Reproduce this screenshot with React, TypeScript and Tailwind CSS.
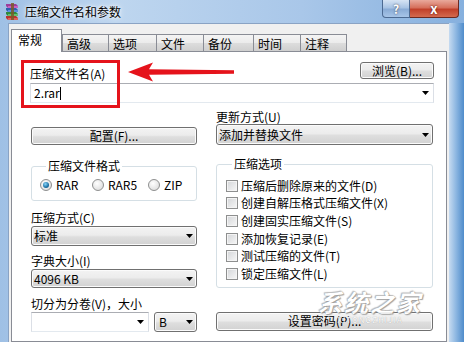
import React from "react";

function Arrow() {
  return (
    <svg width="7" height="4" viewBox="0 0 7 4" className="shrink-0">
      <path d="M0 0H7L3.5 4Z" fill="#000" />
    </svg>
  );
}

function Combo({ text, className = "" }: { text: string; className?: string }) {
  return (
    <div
      className={`flex items-center rounded-[3px] border border-[#707070] bg-[linear-gradient(#f3f3f3,#ececec_45%,#dedede_55%,#d2d2d2)] shadow-[inset_0_0_0_1px_#fbfbfb] pl-[2px] pr-[3px] ${className}`}
    >
      <span className="flex-1 leading-[14px] whitespace-nowrap">{text}</span>
      <Arrow />
    </div>
  );
}

function Btn({ text, className = "" }: { text: string; className?: string }) {
  return (
    <div
      className={`flex items-center justify-center rounded-[3px] border border-[#707070] bg-[linear-gradient(#f3f3f3,#ececec_45%,#dedede_55%,#d2d2d2)] shadow-[inset_0_0_0_1px_#fbfbfb] leading-[14px] whitespace-nowrap ${className}`}
    >
      {text}
    </div>
  );
}

function Check() {
  return (
    <div className="w-[12px] h-[12px] shrink-0 border border-[#8e8f8f] bg-[linear-gradient(135deg,#d3d5d8,#f7f7f7)] shadow-[inset_0_0_0_1px_#f4f4f4]" />
  );
}

function Radio({ on = false }: { on?: boolean }) {
  return (
    <div className="w-[12px] h-[12px] shrink-0 rounded-full border border-[#8e8f8f] bg-[radial-gradient(circle_at_40%_35%,#ffffff,#d6d6d6)] flex items-center justify-center">
      {on && (
        <div className="w-[6px] h-[6px] rounded-full bg-[radial-gradient(circle_at_40%_35%,#8ad6fa,#1b70a3_60%,#0d4b78)]" />
      )}
    </div>
  );
}

function RarIcon() {
  return (
    <svg width="16" height="17" viewBox="0 0 16 17">
      <path d="M2 1h10l2 2v2H4L2 3Z" fill="#9c3e9a" />
      <path d="M4 3h10v2H4Z" fill="#c862c4" />
      <path d="M2 5h10l2 2v2H4L2 7Z" fill="#2f5fae" />
      <path d="M4 7h10v2H4Z" fill="#5b8ee0" />
      <path d="M2 9h10l2 2v2H4L2 11Z" fill="#2e8a3e" />
      <path d="M4 11h10v2H4Z" fill="#63c06e" />
      <path d="M2 13h10l2 2v2H4L2 15Z" fill="#b9342d" />
      <path d="M4 15h10v2H4Z" fill="#e0605a" />
      <rect x="7" y="0" width="3" height="17" fill="#7a5a2a" opacity="0.85" />
    </svg>
  );
}

const checks = [
  "压缩后删除原来的文件(D)",
  "创建自解压格式压缩文件(X)",
  "创建固实压缩文件(S)",
  "添加恢复记录(E)",
  "测试压缩的文件(T)",
  "锁定压缩文件(L)",
];

const tabs = [
  { t: "高级", w: "w-[47px]" },
  { t: "选项", w: "w-[49px]" },
  { t: "文件", w: "w-[48px]" },
  { t: "备份", w: "w-[51px]" },
  { t: "时间", w: "w-[48px]" },
  { t: "注释", w: "w-[47px]" },
];

export default function App() {
  return (
    <div className="relative w-[464px] h-[342px] overflow-hidden flex flex-col bg-[linear-gradient(to_right,#9fc0e5,#bed6ef_25%,#a9c7e9_65%,#86b0de)] text-[12px] text-black font-['Noto_Sans_CJK_SC','Noto_Sans',sans-serif]">
      {/* title bar */}
      <div className="h-[23px] shrink-0 flex items-start">
        <div className="flex items-center h-[23px] pl-[4px]">
          <RarIcon />
          <span className="ml-[5px] leading-[14px] [text-shadow:0_0_6px_#ffffff,0_0_3px_#ffffff]">
            压缩文件名和参数
          </span>
        </div>
        <div className="ml-auto mr-[5px] flex">
          <div className="w-[28px] h-[18px] rounded-bl-[4px] border border-t-0 border-[#4c6a92] bg-[linear-gradient(#d6e4f4,#a9c4e4_45%,#8aacd6_55%,#a7c5e8)] flex items-center justify-center text-white font-bold text-[12px] leading-[12px] [text-shadow:0_0_2px_#334]">
            ?
          </div>
          <div className="w-[49px] h-[18px] rounded-br-[4px] border border-t-0 border-l-0 border-[#6b2a22] bg-[linear-gradient(#e9a99c,#d6705c_45%,#c1402a_55%,#d46a4f)] flex items-center justify-center text-white font-bold text-[13px] leading-[13px] [text-shadow:0_0_2px_#400]">
            x
          </div>
        </div>
      </div>

      <div className="flex-1 flex min-h-0">
        <div className="w-[8px] shrink-0" />
        {/* client area */}
        <div className="flex-1 flex flex-col bg-[#f0f0f0] border-l border-t border-[#8aa3c4]">
          {/* tabs */}
          <div className="h-[22px] mt-[5px] ml-[2px] flex items-end">
            <div className="relative z-10 w-[51px] h-[23px] -mb-px bg-white border border-b-0 border-[#898c95] pl-[6px] pt-[3px] leading-[14px]">
              常规
            </div>
            {tabs.map((tb, i) => (
              <div
                key={tb.t}
                className={`${tb.w} h-[17px] border border-b-0 border-[#898c95] bg-[linear-gradient(#f4f4f4,#ebebeb_50%,#dddddd_50%,#cfcfcf)] pl-[4px] pt-[2px] leading-[14px] ${i === 0 ? "" : "-ml-px"}`}
              >
                {tb.t}
              </div>
            ))}
          </div>

          {/* panel */}
          <div className="relative flex-1 ml-[2px] mr-[2px] bg-white border border-[#898c95]">
            {/* row 1 */}
            <div className="flex items-start pl-[18px] pr-[12px] pt-[10px]">
              <span className="mt-[5px] leading-[14px]">压缩文件名(A)</span>
              <Btn text="浏览(B)..." className="ml-auto w-[74px] h-[17px]" />
            </div>
            <div className="mx-[18px] mr-[12px] mt-[2px] h-[20px] flex items-center bg-white border border-t-[#abadb3] border-l-[#dbdfe6] border-r-[#dbdfe6] border-b-[#e3e9ef] pl-[3px] pr-[4px]">
              <span className="leading-[14px]">2.rar</span>
              <span className="w-px h-[13px] bg-black" />
              <span className="flex-1" />
              <Arrow />
            </div>

            {/* columns */}
            <div className="flex pl-[19px] pr-[13px] gap-[19px]">
              {/* left */}
              <div className="w-[166px] flex flex-col">
                <Btn text="配置(F)..." className="mt-[24px] h-[18px]" />
                <fieldset className="mt-[14px] border border-[#d5dfe5] rounded-[3px] pt-[5px] pb-[8px] pl-[8px]">
                  <legend className="ml-[6px] px-[2px] leading-[14px]">压缩文件格式</legend>
                  <div className="flex items-center h-[14px]">
                    <div className="w-[52px] flex items-center gap-[4px]">
                      <Radio on />
                      <span className="leading-[14px]">RAR</span>
                    </div>
                    <div className="w-[56px] flex items-center gap-[4px]">
                      <Radio />
                      <span className="leading-[14px]">RAR5</span>
                    </div>
                    <div className="flex items-center gap-[4px]">
                      <Radio />
                      <span className="leading-[14px]">ZIP</span>
                    </div>
                  </div>
                </fieldset>
                <span className="mt-[10px] leading-[14px]">压缩方式(C)</span>
                <Combo text="标准" className="mt-[1px] h-[20px]" />
                <span className="mt-[8px] leading-[14px]">字典大小(I)</span>
                <Combo text="4096 KB" className="mt-[1px] h-[19px]" />
                <span className="mt-[9px] leading-[14px]">切分为分卷(V)，大小</span>
                <div className="mt-[1px] flex gap-[5px]">
                  <div className="w-[118px] h-[20px] flex items-center justify-end bg-white border border-t-[#abadb3] border-l-[#dbdfe6] border-r-[#dbdfe6] border-b-[#e3e9ef] pr-[4px]">
                    <Arrow />
                  </div>
                  <Combo text="B" className="flex-1 h-[20px] pl-[4px]" />
                </div>
              </div>

              {/* right */}
              <div className="w-[217px] flex flex-col">
                <span className="mt-[7px] leading-[14px]">更新方式(U)</span>
                <Combo text="添加并替换文件" className="h-[21px]" />
                <fieldset className="mt-[12px] border border-[#d5dfe5] rounded-[3px] pt-[6px] pb-[4px] pl-[9px]">
                  <legend className="ml-[6px] px-[2px] leading-[14px]">压缩选项</legend>
                  {checks.map((c) => (
                    <div key={c} className="h-[17.6px] flex items-center gap-[3px]">
                      <Check />
                      <span className="leading-[14px] whitespace-nowrap">{c}</span>
                    </div>
                  ))}
                </fieldset>
                <Btn text="设置密码(P)..." className="mt-[24px] h-[19px]" />
              </div>
            </div>
          </div>
        </div>
        <div className="w-[15px] shrink-0 bg-[linear-gradient(to_right,#c6dbf1,#8fb8e2_45%,#4f8ccb)]" />
      </div>

      {/* red annotation box */}
      <div className="absolute left-[21px] top-[60px] w-[99px] h-[48px] border-[3px] border-[#e5131b]" />
      {/* red arrow */}
      <svg className="absolute left-[126px] top-[61px]" width="108" height="22" viewBox="0 0 108 22">
        <path d="M2 11L27 1.5L23 8.2L108 9.2V12.8L23 13.8L27 20.5Z" fill="#e5131b" />
      </svg>

      {/* watermark */}
      <div className="absolute left-[318px] top-[289px] flex flex-col items-center opacity-90 pointer-events-none">
        <span className="italic font-bold text-[24px] leading-[26px] tracking-[2px] text-white [text-shadow:0_0_1px_#777,1px_1px_1px_#999,-1px_-1px_1px_#bbb]">
          系统之家
        </span>
        <span className="text-[8px] leading-[9px] tracking-[1px] text-white [text-shadow:0_0_1px_#888]">
          XITONGZHIJIA
        </span>
      </div>
    </div>
  );
}
